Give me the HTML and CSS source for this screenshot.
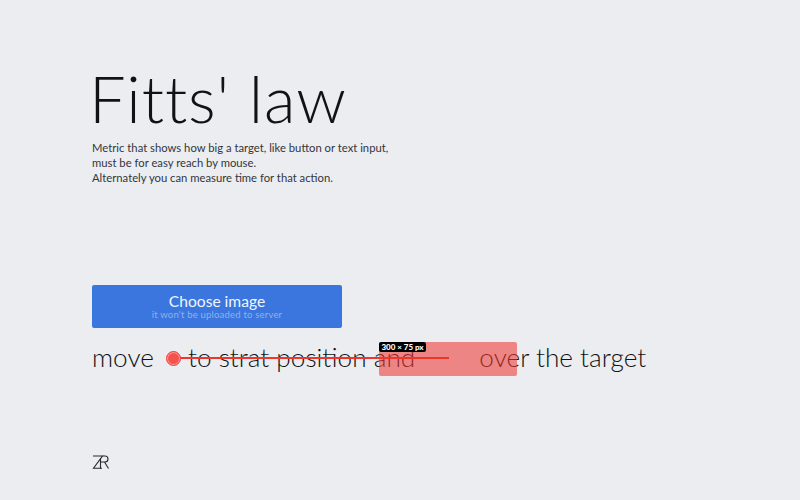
FILE: index.html
```html
<!DOCTYPE html>
<html lang="en">
<head>
    <meta charset="UTF-8">
    <title>Fitts' law</title>
    <link rel="stylesheet" href="styles.css">
</head>
<body>
    <main>
        <header>
            <h1>Fitts' law</h1>
            <p>Metric that shows how big a target, like button or text input,<br>must be for easy reach by mouse.<br>Alternately you can measure time for that action.</p>
        </header>
        <button class="choose">
            <span class="choose-title">Choose image</span>
            <span class="choose-note">it won't be uploaded to server</span>
        </button>
        <div class="steps">
            <span class="word-move">move</span>
            <span class="word-start">to strat position and</span>
            <span class="word-over">over the target</span>
            <div class="target"><span class="target-size">300 × 75 px</span></div>
            <div class="track"></div>
            <div class="dot"></div>
        </div>
        <svg class="logo" width="18" height="14" viewBox="0 0 18 14" fill="none" stroke="#26282c" stroke-width="1.1">
            <path d="M1 1H10.5L1.5 13.2H10"/>
            <path d="M8.5 3.5V13.5M10.5 1H13Q16 1 16 4T13 7H9M12.5 7L16.5 13.5"/>
        </svg>
    </main>
</body>
</html>
```

FILE: styles.css
```css
body {
    margin: 0;
    width: 800px;
    height: 500px;
    overflow: hidden;
    background-color: #ebedf1;
    color: #111214;
    font-family: "Lato", sans-serif;
}

main {
    display: flex;
    flex-direction: column;
    align-items: flex-start;
    padding: 59px 0 0 92px;
}

h1 {
    margin: 0 0 0 -3px;
    font-size: 65px;
    line-height: 78px;
    font-weight: 300;
    letter-spacing: 0.9px;
}

header p {
    margin: 3px 0 0;
    font-size: 11.27px;
    line-height: 15px;
    color: #33353a;
}

.choose {
    display: flex;
    flex-direction: column;
    align-items: center;
    justify-content: center;
    width: 250px;
    height: 43px;
    margin-top: 100px;
    padding: 0;
    border: none;
    border-radius: 2px;
    background-color: #3a76dd;
    color: #f1f5fd;
    font-family: inherit;
}

.choose-title {
    font-size: 15.6px;
    line-height: 16px;
}

.choose-note {
    font-size: 9.5px;
    line-height: 11px;
    letter-spacing: 0.2px;
    color: #90b2ec;
}

.steps {
    position: relative;
    width: 600px;
    height: 34px;
    margin-top: 14px;
    font-size: 26.2px;
    font-weight: 300;
    line-height: 30px;
    white-space: nowrap;
}

.word-start {
    margin-left: 27px;
}

.word-over {
    margin-left: 57px;
}

.target {
    position: absolute;
    left: 287px;
    top: 0;
    width: 138px;
    height: 34px;
    border-radius: 2px;
    background-color: rgba(240, 55, 50, 0.57);
}

.target-size {
    display: block;
    width: 47px;
    height: 10px;
    border-radius: 2px;
    background-color: #000;
    color: #fff;
    font-size: 8px;
    font-weight: 900;
    line-height: 10px;
    text-align: center;
}

.track {
    position: absolute;
    left: 83px;
    top: 15px;
    width: 274px;
    height: 2px;
    background-color: #f0352c;
}

.dot {
    position: absolute;
    left: 74px;
    top: 9px;
    width: 13px;
    height: 13px;
    border: 1px solid #f0443f;
    border-radius: 50%;
    background-color: #f4524e;
    box-shadow: inset 0 0 0 1px rgba(255, 200, 200, 0.7);
}

.logo {
    margin-top: 79px;
}
```
